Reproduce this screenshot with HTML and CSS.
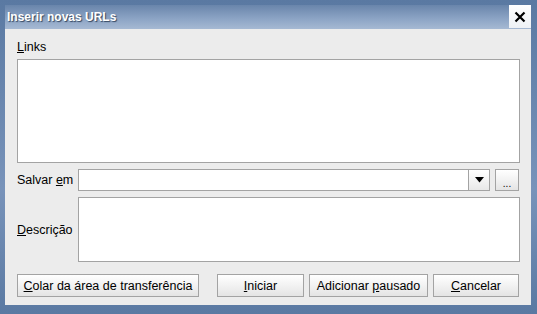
FILE: index.html
```html
<!DOCTYPE html>
<html lang="pt">
<head>
    <meta charset="UTF-8">
    <title>Inserir novas URLs</title>
    <link rel="stylesheet" href="styles.css">
</head>
<body>
    <div class="frame">
        <div class="titlebar">
            <span class="title">Inserir novas URLs</span>
            <div class="close">
                <svg width="12" height="12" viewBox="0 0 12 12">
                    <path d="M1.5 1.5 L10.5 10.5 M10.5 1.5 L1.5 10.5" stroke="#000" stroke-width="2.2"/>
                </svg>
            </div>
        </div>
        <div class="dialog">
            <label class="links-label"><u>L</u>inks</label>
            <div class="box links-box"></div>

            <div class="row save-row">
                <label class="row-label">Salvar <u>e</u>m</label>
                <div class="combo">
                    <div class="combo-text"></div>
                    <div class="combo-arrow">
                        <svg width="9" height="6" viewBox="0 0 9 6"><path d="M0 0 H9 L4.5 5.5 Z" fill="#000"/></svg>
                    </div>
                </div>
                <button class="btn browse">...</button>
            </div>

            <div class="row desc-row">
                <label class="row-label"><u>D</u>escrição</label>
                <div class="box desc-box"></div>
            </div>

            <div class="buttons">
                <button class="btn btn-paste"><u>C</u>olar da área de transferência</button>
                <button class="btn btn-start"><u>I</u>niciar</button>
                <button class="btn btn-paused">Adicionar <u>p</u>ausado</button>
                <button class="btn btn-cancel"><u>C</u>ancelar</button>
            </div>
        </div>
    </div>
</body>
</html>
```

FILE: styles.css
```css
body {
    margin: 0;
    padding: 0;
    font-family: "Liberation Sans", Arial, sans-serif;
    font-size: 12.5px;
    color: #000;
    background-color: #dfe6ef;
}
.frame {
    width: 537px;
    height: 314px;
    box-sizing: border-box;
    padding: 5px 6px 9px 5px;
    background: linear-gradient(to bottom, #5a79a2, #7893ba 60%, #5a79a2);
    display: flex;
    flex-direction: column;
}
.titlebar {
    height: 24px;
    display: flex;
    align-items: center;
    justify-content: space-between;
    background: linear-gradient(to bottom, #6985ab, #8ba3c4 55%, #a6b9d3);
}
.title {
    padding-left: 2px;
    font-weight: bold;
    font-size: 12px;
    color: #fff;
    text-shadow: 1px 1px 1px #33465f;
}
.close {
    width: 22px;
    height: 23px;
    background: linear-gradient(to bottom, #ffffff, #eef1f5);
    display: flex;
    align-items: center;
    justify-content: center;
    align-self: flex-start;
}
.dialog {
    flex: 1;
    background-color: #ececec;
    padding: 10px 6px 0 12px;
    display: flex;
    flex-direction: column;
}
label {
    display: block;
}
u {
    text-decoration: underline;
}
.links-label {
    height: 14px;
    line-height: 14px;
    margin-top: 1px;
}
.box {
    background-color: #fff;
    border: 1px solid #a3a3a3;
    box-sizing: border-box;
}
.links-box {
    margin-top: 5px;
    width: 503px;
    height: 104px;
}
.row {
    display: flex;
    align-items: center;
}
.row-label {
    width: 61px;
    flex: none;
}
.save-row {
    margin-top: 6px;
    height: 22px;
}
.combo {
    width: 412px;
    height: 22px;
    box-sizing: border-box;
    border: 1px solid #a3a3a3;
    background-color: #fff;
    display: flex;
}
.combo-text {
    flex: 1;
}
.combo-arrow {
    width: 20px;
    border-left: 1px solid #a3a3a3;
    background: linear-gradient(to bottom, #ffffff, #e8e8e8);
    display: flex;
    align-items: center;
    justify-content: center;
}
.btn {
    font-family: "Liberation Sans", Arial, sans-serif;
    font-size: 12.5px;
    color: #000;
    height: 23px;
    box-sizing: border-box;
    border: 1px solid #a3a3a3;
    background: linear-gradient(to bottom, #ffffff, #f2f2f2 50%, #e4e4e4);
    padding: 0;
    margin: 0;
}
.browse {
    width: 24px;
    height: 22px;
    margin-left: 5px;
    font-size: 10px;
    padding-top: 6px;
}
.desc-row {
    margin-top: 6px;
}
.desc-box {
    width: 442px;
    height: 65px;
}
.buttons {
    display: flex;
    margin-top: 12px;
}
.btn-paste {
    width: 182px;
}
.btn-start {
    width: 87px;
    margin-left: 18px;
}
.btn-paused {
    width: 119px;
    margin-left: 5px;
}
.btn-cancel {
    width: 86px;
    margin-left: 5px;
}
```
